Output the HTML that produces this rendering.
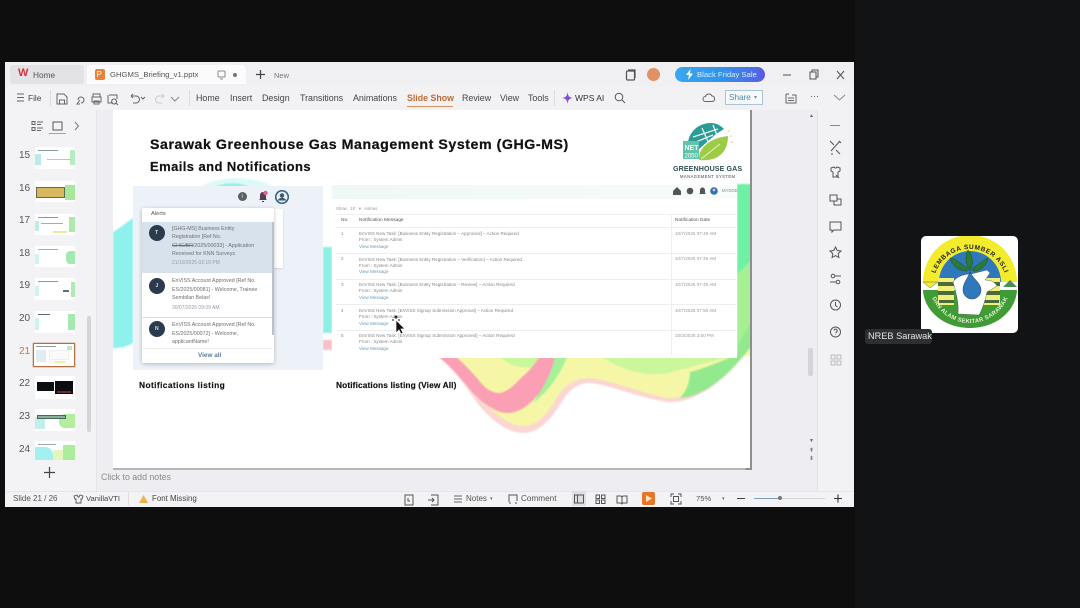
<!DOCTYPE html>
<html><head><meta charset="utf-8">
<style>
html,body{margin:0;padding:0;background:#101112;}
body{width:1080px;height:608px;overflow:hidden;position:relative;font-family:"Liberation Sans",sans-serif;}
#w{position:absolute;left:0;top:0;width:1080px;height:608px;filter:blur(.35px);overflow:hidden;}
.a{position:absolute;}
.t{position:absolute;white-space:nowrap;line-height:1;color:#4a4a4a;}
.m{font-size:8.9px;color:#444;top:94px;}
.th{position:absolute;left:35px;width:40px;background:#fff;overflow:hidden;}
.n{position:absolute;left:19px;font-size:10px;color:#555;line-height:1;}
.row{position:absolute;left:359px;font-size:4.55px;color:#888;line-height:6.4px;white-space:nowrap;}
.row i{font-style:normal;color:#6a9abd;}
.d{position:absolute;left:675px;font-size:4.6px;color:#999;white-space:nowrap;line-height:1;}
.no{position:absolute;left:341px;font-size:4.6px;color:#888;line-height:1;}
.al{position:absolute;left:172px;font-size:5.3px;line-height:8.5px;color:#6e6e6e;white-space:nowrap;}
svg{position:absolute;overflow:visible;}
</style></head><body><div id="w">
<div class="a" style="left:0;top:0;width:1080px;height:608px;background:#0e0e0f;"></div>
<div class="a" style="left:855px;top:0;width:225px;height:608px;background:#111315;"></div>

<!-- window -->
<div class="a" style="left:5px;top:62px;width:849px;height:445px;background:#eeeef2;"></div>
<div class="a" style="left:5px;top:62px;width:849px;height:24px;background:#f0f0f3;"></div>
<div class="a" style="left:5px;top:86px;width:849px;height:24px;background:#f2f2f5;"></div>
<div class="a" style="left:5px;top:110px;width:91px;height:381px;background:#f3f3f5;"></div>
<div class="a" style="left:96px;top:110px;width:1px;height:381px;background:#e5e5e8;"></div>
<div class="a" style="left:5px;top:491px;width:849px;height:16px;background:#f3f3f5;border-top:1px solid #e6e6e8;box-sizing:border-box;"></div>
<div class="a" style="left:817px;top:110px;width:37px;height:381px;background:#f2f2f5;border-left:1px solid #e2e2e6;box-sizing:border-box;"></div>

<!-- tabs -->
<div class="a" style="left:10px;top:65px;width:74px;height:19px;background:#e3e3e6;border-radius:3px;"></div>
<div class="a" style="left:87px;top:65px;width:159px;height:19px;background:#fbfbfc;border-radius:4px 4px 0 0;"></div>
<div class="t" style="left:18px;top:68px;font-size:11px;font-weight:bold;color:#d8323c;">W</div>
<div class="t" style="left:33px;top:71px;font-size:8.3px;color:#555;">Home</div>
<div class="a" style="left:95px;top:69px;width:10px;height:11px;background:#e8823a;border-radius:2px;"></div>
<div class="t" style="left:96.5px;top:70.5px;font-size:8px;color:#fff;">P</div>
<div class="t" style="left:110px;top:71px;font-size:7.7px;color:#555;">GHGMS_Briefing_v1.pptx</div>
<svg style="left:217px;top:70px" width="10" height="10" fill="none" stroke="#888" stroke-width="1"><rect x="1" y="1" width="7" height="6" rx="1"/><path d="M3 9h3"/></svg>
<div class="a" style="left:233px;top:73px;width:4px;height:4px;border-radius:50%;background:#777;"></div>
<svg style="left:255px;top:69px" width="11" height="11" stroke="#444" stroke-width="1.2"><path d="M5.5 1v9M1 5.5h9"/></svg>
<div class="t" style="left:274px;top:72px;font-size:7.5px;color:#777;">New</div>
<svg style="left:625px;top:69px" width="12" height="12" fill="none" stroke="#555" stroke-width="1.2"><rect x="1.5" y="2" width="8" height="9" rx="1"/><path d="M3 1h7v8"/></svg>
<div class="a" style="left:647px;top:68px;width:13px;height:13px;border-radius:50%;background:#e39163;"></div>
<div class="a" style="left:675px;top:67px;width:90px;height:15px;border-radius:8px;background:linear-gradient(90deg,#3ba6ee,#2f95ec 50%,#4f6ae8 90%,#5a58de);"></div>
<svg style="left:686px;top:69px" width="7" height="11"><path d="M4.500 0L0 6h3L2 11 7 4.500H4z" fill="#fff"/></svg>
<div class="t" style="left:697px;top:71px;font-size:7.700px;color:#dcecfa;">Black Friday Sale</div>
<svg style="left:783px;top:69px" width="60" height="12" fill="none" stroke="#555" stroke-width="1"><path d="M0 6h8"/><rect x="27" y="3" width="6" height="7"/><path d="M29 3V1h6v7h-2"/><path d="M54 2l7 8M61 2l-7 8"/></svg>

<!-- menu -->
<svg style="left:17px;top:93px" width="8" height="10" stroke="#666" stroke-width="1"><path d="M0 1h7M0 4.500h7M0 8h7"/></svg>
<div class="t" style="left:28px;top:94px;font-size:8.300px;color:#444;">File</div>
<div class="a" style="left:50px;top:90px;width:1px;height:16px;background:#ddd;"></div>
<svg style="left:56px;top:92px" width="125" height="13" fill="none" stroke="#666" stroke-width="1">
<path d="M1 2h7l3 3v7H1zM3.500 12V8h5v4"/>
<path d="M22 8a3 3 0 1 1 3 3M24 8l-3 4h3"/>
<path d="M37 5V2h7v3M36 5h9v5h-9zM38 9h5v3h-5z"/>
<path d="M53 3h8v4M52 3v8h5M58 7a2.500 2.500 0 1 0 .1 0M60 11l2 2"/>
<path d="M75 4h5a3 3 0 0 1 0 7h-3M75 4l2-2M75 4l2 2M85 5l2 2 2-2"/>
<path stroke="#ccc" d="M108 4h-5a3 3 0 0 0 0 7h3M108 4l-2-2M108 4l-2 2"/>
<path d="M115 5l4 4 4-4" stroke="#888"/></svg>
<div class="a" style="left:189px;top:90px;width:1px;height:16px;background:#ddd;"></div>
<div class="t m" style="left:196px;">Home</div>
<div class="t m" style="left:230px;">Insert</div>
<div class="t m" style="left:262px;">Design</div>
<div class="t m" style="left:300px;">Transitions</div>
<div class="t m" style="left:353px;">Animations</div>
<div class="t m" style="left:407px;color:#c06a33;font-weight:bold;font-size:8.800px;">Slide Show</div>
<div class="a" style="left:407px;top:106px;width:46px;height:1px;background:#d9915f;"></div>
<div class="t m" style="left:462px;">Review</div>
<div class="t m" style="left:500px;">View</div>
<div class="t m" style="left:528px;">Tools</div>
<div class="a" style="left:554px;top:90px;width:1px;height:16px;background:#ddd;"></div>
<svg style="left:562px;top:92px" width="11" height="12"><path d="M5.500 0C6 4 7 5.500 11 6 7 6.500 6 8 5.500 12 5 8 4 6.500 0 6 4 5.500 5 4 5.500 0z" fill="#8050d8"/></svg>
<div class="t m" style="left:575px;color:#333;font-size:8.500px;">WPS AI</div>
<svg style="left:614px;top:92px" width="12" height="12" fill="none" stroke="#555" stroke-width="1"><circle cx="5" cy="5" r="3.800"/><path d="M8 8l3 3"/></svg>
<svg style="left:702px;top:92px" width="13" height="12" fill="none" stroke="#666" stroke-width="1"><path d="M3.500 9.500a2.500 2.500 0 0 1 0-5 3.500 3.500 0 0 1 6.500-.5 2.800 2.800 0 0 1 .5 5.500z"/></svg>
<div class="a" style="left:725px;top:90px;width:38px;height:15px;border:1px solid #a9c5d3;box-sizing:border-box;background:#f6f8fa;"></div>
<div class="t" style="left:729px;top:94px;font-size:8.200px;color:#4e89ac;">Share</div>
<div class="t" style="left:754px;top:95px;font-size:6px;color:#888;">▾</div>
<svg style="left:785px;top:92px" width="12" height="12" fill="none" stroke="#666" stroke-width="1"><path d="M1 2h3M1 2v9h10V3H7M3 6h6M3 8.500h6"/></svg>
<div class="t" style="left:810px;top:92px;font-size:9px;color:#555;">···</div>
<svg style="left:834px;top:95px" width="11" height="6" fill="none" stroke="#888" stroke-width="1"><path d="M0 0l5.500 5L11 0"/></svg>

<!-- left panel -->
<svg style="left:32px;top:120px" width="55" height="13" fill="none" stroke="#666" stroke-width="1"><path d="M0 1.500h3v3H0zM0 7.500h3v3H0zM5 2h6M5 4.500h4M5 8h6M5 10.500h4"/><rect x="21" y="2" width="9" height="8" stroke="#555"/><path d="M43 2l3.500 4L43 10" stroke="#777"/></svg>
<div class="a" style="left:49px;top:133px;width:17px;height:1px;background:#d9915f;"></div>

<div class="n" style="top:151px;">15</div>
<div class="n" style="top:184px;">16</div>
<div class="n" style="top:216px;">17</div>
<div class="n" style="top:249px;">18</div>
<div class="n" style="top:281px;">19</div>
<div class="n" style="top:314px;">20</div>
<div class="n" style="top:347px;color:#c27a4a;">21</div>
<div class="n" style="top:379px;">22</div>
<div class="n" style="top:412px;">23</div>
<div class="n" style="top:445px;">24</div>

<div class="th" style="top:147px;height:22px;">
 <div class="a" style="left:0;top:7px;width:6px;height:11px;background:#b8ecec;"></div><div class="a" style="left:35px;top:3px;width:5px;height:15px;background:#b5ecc0;"></div>
 <div class="a" style="left:3px;top:3px;width:20px;height:1px;background:#8a9aa0;"></div><div class="a" style="left:12px;top:12px;width:24px;height:1px;background:#c0c4c8;"></div></div>
<div class="th" style="top:181px;height:21px;">
 <div class="a" style="left:1px;top:6px;width:29px;height:11px;background:#d9b75c;border:1px solid #5a6a55;box-sizing:border-box;"></div><div class="a" style="left:30px;top:4px;width:10px;height:15px;background:#a8e89a;"></div></div>
<div class="th" style="top:214px;height:21px;">
 <div class="a" style="left:0;top:7px;width:4px;height:10px;background:#bdeee8;"></div><div class="a" style="left:34px;top:3px;width:6px;height:15px;background:#aeeab0;"></div>
 <div class="a" style="left:3px;top:3px;width:20px;height:1px;background:#8a9aa0;"></div><div class="a" style="left:6px;top:9px;width:22px;height:1px;background:#aab;"></div><div class="a" style="left:18px;top:17px;width:14px;height:2px;background:#e9ec9f;"></div></div>
<div class="th" style="top:246px;height:21px;">
 <div class="a" style="left:0;top:8px;width:4px;height:10px;background:#cff3ee;"></div><div class="a" style="left:31px;top:5px;width:9px;height:13px;background:#a4e9b2;border-radius:4px 0 0 4px;"></div>
 <div class="a" style="left:3px;top:3px;width:20px;height:1px;background:#a0aaa8;"></div></div>
<div class="th" style="top:278px;height:22px;">
 <div class="a" style="left:0;top:8px;width:4px;height:10px;background:#cff3ee;"></div><div class="a" style="left:36px;top:4px;width:4px;height:15px;background:#aeeab8;"></div>
 <div class="a" style="left:3px;top:3px;width:20px;height:1px;background:#8a9aa0;"></div><div class="a" style="left:28px;top:12px;width:6px;height:2px;background:#5a6f85;"></div></div>
<div class="th" style="top:311px;height:22px;">
 <div class="a" style="left:0;top:7px;width:4px;height:12px;background:#cff3ee;"></div><div class="a" style="left:33px;top:3px;width:7px;height:16px;background:#a4e9b2;"></div>
 <div class="a" style="left:3px;top:3px;width:12px;height:1px;background:#667;"></div></div>
<div class="a" style="left:33px;top:343px;width:42px;height:24px;border:1px solid #b5703f;box-sizing:border-box;background:#fff;border-radius:1px;box-shadow:0 0 0 .5px #d9a98a;">
 <div class="a" style="left:2px;top:6px;width:10px;height:12px;background:#e3ebf2;"></div><div class="a" style="left:15px;top:6px;width:20px;height:10px;background:#fafafa;border:.5px solid #eee;box-sizing:border-box;"></div><div class="a" style="left:2px;top:2px;width:20px;height:1px;background:#8a9aa0;"></div><div class="a" style="left:33px;top:2px;width:5px;height:4px;background:#bfe7c4;"></div><div class="a" style="left:20px;top:17px;width:12px;height:2px;background:#eff0a9;"></div></div>
<div class="th" style="top:376px;height:23px;">
 <div class="a" style="left:2px;top:6px;width:17px;height:9px;background:#0c0f12;"></div><div class="a" style="left:20px;top:5px;width:18px;height:13px;background:#0b0c10;"></div><div class="a" style="left:22px;top:15px;width:14px;height:2px;background:#6e2a2a;"></div></div>
<div class="th" style="top:409px;height:22px;">
 <div class="a" style="left:0;top:8px;width:10px;height:12px;background:#c4eeea;"></div><div class="a" style="left:24px;top:5px;width:16px;height:14px;background:#b4eda0;border-radius:6px 0 0 6px;"></div>
 <div class="a" style="left:2px;top:6px;width:29px;height:4px;background:#8cb09a;border:1px solid #446a5d;box-sizing:border-box;"></div></div>
<div class="th" style="top:441px;height:19px;">
 <div class="a" style="left:0;top:6px;width:18px;height:13px;background:#a6eff0;border-radius:0 8px 0 0;"></div><div class="a" style="left:18px;top:9px;width:10px;height:10px;background:#e4f5c0;"></div><div class="a" style="left:28px;top:4px;width:12px;height:15px;background:#abed98;"></div>
 <div class="a" style="left:3px;top:3px;width:18px;height:1px;background:#9aa;"></div></div>
<div class="a" style="left:87px;top:316px;width:4px;height:116px;background:#d5d5d8;border-radius:2px;"></div>
<svg style="left:44px;top:467px" width="11" height="11" stroke="#444" stroke-width="1.200"><path d="M5.500 0v11M0 5.500h11"/></svg>

<!-- slide -->
<div class="a" style="left:113px;top:110px;width:639px;height:360px;background:linear-gradient(90deg,#b5b5b7 99%,#8e8e90 99%);"></div>
<div class="a" style="left:113px;top:110px;width:637px;height:358px;background:#fff;overflow:hidden;">
 <svg style="left:0;top:0;filter:blur(.8px)" width="637" height="358" viewBox="113 110 637 358">
  <path d="M113 232C120 228 127 222 133 218V343C127 347 120 348 113 348Z" fill="#8ff1eb"/>
  <path d="M200 187C218 176 252 174 274 187Z" fill="#dcfaf7"/>
  <path d="M214 187C225 182 240 182 250 187Z" fill="#97efe9"/>
  <path d="M437 356C450 365 465 385 473 397C485 415 505 433 523 433C540 433 552 418 563 400C570 388 580 383 590 383C610 385 640 398 667 402C700 404 730 375 752 345V356Z" fill="#fbd6d2"/>
  <path d="M445 356C458 368 470 385 478 395C490 410 508 426 523 426C538 426 548 413 558 396C566 383 578 378 590 378C612 380 640 393 667 398C695 400 728 372 752 342V356Z" fill="#f5f7a6"/>
  <path d="M500 356C510 370 540 372 556 358L600 356C625 372 650 378 672 372C695 366 720 358 738 356Z" fill="#caf69c"/>
  <path d="M437 356C452 366 466 385 473 393C485 405 497 413 507 413C520 413 531 404 541 391C548 380 553 370 556 358L540 356C534 366 528 372 522 377C514 385 508 392 499 393C490 393 483 386 477 378C470 370 462 362 455 356Z" fill="#fb9fb4"/>
  <path d="M555 357C552 372 545 385 533 403C548 392 560 375 567 357Z" fill="#a6f29a"/>
  <path d="M680 398C705 396 730 375 752 345V333L738 354C720 362 700 370 690 372C690 382 686 392 680 398Z" fill="#93ea8e"/>
  <path d="M737 184H752V260L737 275Z" fill="#6ff0a5"/>
  <path d="M737 275L752 260V320L737 345Z" fill="#a7ef93"/>
  <path d="M737 345L752 320V345L737 356Z" fill="#93ea8e"/>
  <path d="M323 247H332V333H323Z" fill="#8cf0e4"/>
  <path d="M323 340H332V350H323Z" fill="#f6c0c8"/>
 </svg>
 <div class="a" style="left:20px;top:76px;width:190px;height:184px;background:#edf2f8;"></div>
 <div class="a" style="left:160px;top:99px;width:10px;height:59px;background:#fff;box-shadow:0 1px 2px rgba(0,0,0,.12);"></div>
 <div class="a" style="left:29px;top:98px;width:132px;height:155px;background:#fff;box-shadow:0 1px 4px rgba(0,0,0,.25);border-radius:2px;"></div>
 <div class="a" style="left:29px;top:112px;width:130px;height:51px;background:#d7e2ed;"></div>
 <div class="a" style="left:159px;top:112px;width:2px;height:113px;background:#b9c2cc;"></div>
 <div class="a" style="left:29px;top:207px;width:130px;height:1px;background:#ddd;"></div>
</div>
<div class="t" style="left:150px;top:137.500px;font-size:14.200px;font-weight:bold;color:#111;letter-spacing:.55px;-webkit-text-stroke:.25px #111;">Sarawak Greenhouse Gas Management System (GHG-MS)</div>
<div class="t" style="left:150px;top:160px;font-size:13px;font-weight:bold;color:#111;letter-spacing:.42px;-webkit-text-stroke:.2px #111;">Emails and Notifications</div>

<!-- alerts -->
<div class="a" style="left:238px;top:192px;width:9px;height:9px;border-radius:50%;background:#5a5f63;"></div>
<div class="t" style="left:241.500px;top:194px;font-size:6px;color:#eee;">i</div>
<svg style="left:258px;top:191px" width="10" height="12"><path d="M5 1a3 3 0 0 1 3 3v4l1 1H1l1-1V4a3 3 0 0 1 3-3zM4 10h2v1H4z" fill="#5b3a55"/><circle cx="7.500" cy="2" r="2.200" fill="#d9668a"/></svg>
<svg style="left:275px;top:190px" width="14" height="14"><circle cx="7" cy="7" r="7" fill="#2e5f80"/><circle cx="7" cy="7" r="5.500" fill="#e8eef3"/><circle cx="7" cy="5.500" r="2.200" fill="#3a5a72"/><path d="M2.800 10.500c1-2 2.500-2.700 4.200-2.700s3.200.7 4.200 2.700" fill="#3a5a72"/></svg>
<div class="t" style="left:151px;top:211.500px;font-size:5.800px;color:#555;">Alerts</div>
<div class="a" style="left:149px;top:225px;width:16px;height:16px;border-radius:50%;background:#2b3a4d;"></div>
<div class="t" style="left:155px;top:231px;font-size:5px;color:#dde;font-weight:bold;">T</div>
<div class="al" style="top:224.500px;">[GHG-MS] Business Entity<br>Registration [Ref No.<br><s>GHG/BR</s>/2025/00033] - Application<br>Received for KNN Surveys</div>
<div class="t" style="left:172px;top:261px;font-size:5px;color:#99a;">21/10/2025 02:19 PM</div>
<div class="a" style="left:149px;top:278px;width:16px;height:16px;border-radius:50%;background:#2b3a4d;"></div>
<div class="t" style="left:155.500px;top:284px;font-size:5px;color:#dde;font-weight:bold;">J</div>
<div class="al" style="top:277px;">EnVISS Account Approved [Ref No.<br>ES/2025/00081] - Welcome, Trainee<br>Sembilan Belas!</div>
<div class="t" style="left:172px;top:305.500px;font-size:5px;color:#99a;">30/07/2025 09:09 AM</div>
<div class="a" style="left:149px;top:321px;width:16px;height:16px;border-radius:50%;background:#2b3a4d;"></div>
<div class="t" style="left:155px;top:327px;font-size:5px;color:#dde;font-weight:bold;">N</div>
<div class="al" style="top:321px;">EnVISS Account Approved [Ref No.<br>ES/2025/00072] - Welcome,<br>applicantName!</div>
<div class="a" style="left:142px;top:348px;width:130px;height:15px;background:#fff;border-top:1px solid #eee;box-sizing:border-box;"></div>
<div class="t" style="left:198px;top:353px;font-size:6.400px;color:#5d7f9c;font-weight:bold;">View all</div>
<div class="t" style="left:139px;top:381px;font-size:8.400px;font-weight:bold;color:#111;letter-spacing:.4px;-webkit-text-stroke:.15px #111;">Notifications listing</div>
<div class="t" style="left:336px;top:381px;font-size:8.400px;font-weight:bold;color:#111;letter-spacing:.1px;-webkit-text-stroke:.15px #111;">Notifications listing (View All)</div>

<!-- table -->
<div class="a" style="left:332px;top:185px;width:405px;height:173px;background:#fff;"></div>
<div class="a" style="left:332px;top:185px;width:405px;height:14px;background:linear-gradient(90deg,#eef8f6,#f8fcfb);"></div>
<svg style="left:672px;top:186px" width="70" height="10"><path d="M1 5l4-4 4 4v4H1z" fill="#555"/><circle cx="18" cy="5" r="3.300" fill="#555"/><path d="M27 8l1-1V4a2.500 2.500 0 0 1 5 0v3l1 1z" fill="#555"/><circle cx="42" cy="5" r="3.800" fill="#3173a9"/><circle cx="42" cy="4" r="1.300" fill="#dce"/></svg>
<div class="t" style="left:722px;top:188.500px;font-size:4.300px;color:#888;">MYDOE</div>
<div class="t" style="left:336px;top:207px;font-size:4.300px;color:#999;">Show &nbsp;&nbsp;10 &nbsp;&nbsp;▾ &nbsp;&nbsp;entries</div>
<div class="a" style="left:336px;top:214px;width:400px;height:1px;background:#f0f0f2;"></div>
<div class="a" style="left:671px;top:215px;width:1px;height:140px;background:#eceef0;"></div>
<div class="t" style="left:341px;top:219px;font-size:4.800px;color:#555;">No.</div>
<div class="t" style="left:359px;top:219px;font-size:4.800px;color:#555;">Notification Message</div>
<div class="t" style="left:675px;top:219px;font-size:4.800px;color:#555;">Notification Date</div>
<div class="a" style="left:336px;top:227px;width:400px;height:1px;background:#eceef0;"></div>
<div class="a" style="left:336px;top:253px;width:400px;height:1px;background:#eceef0;"></div>
<div class="a" style="left:336px;top:279px;width:400px;height:1px;background:#eceef0;"></div>
<div class="a" style="left:336px;top:304px;width:400px;height:1px;background:#eceef0;"></div>
<div class="a" style="left:336px;top:330px;width:400px;height:1px;background:#eceef0;"></div>
<div class="no" style="top:232px;">1</div><div class="no" style="top:257px;">2</div><div class="no" style="top:283px;">3</div><div class="no" style="top:309px;">4</div><div class="no" style="top:334px;">5</div>
<div class="row" style="top:231px;">EnVISS New Task: [Business Entity Registration – Approved] – Action Required<br>From : System Admin<br><i>View Message</i></div>
<div class="row" style="top:256.500px;">EnVISS New Task: [Business Entity Registration – Verification] – Action Required<br>From : System Admin<br><i>View Message</i></div>
<div class="row" style="top:282px;">EnVISS New Task: [Business Entity Registration – Review] – Action Required<br>From : System Admin<br><i>View Message</i></div>
<div class="row" style="top:308px;">EnVISS New Task: [EnVISS Signup Submission Approval] – Action Required<br>From : System Admin<br><i>View Message</i></div>
<div class="row" style="top:333px;">EnVISS New Task: [EnVISS Signup Submission Approved] – Action Required<br>From : System Admin<br><i>View Message</i></div>
<div class="d" style="top:232px;">10/7/2025 07:49 AM</div><div class="d" style="top:257px;">10/7/2025 07:49 AM</div><div class="d" style="top:283px;">10/7/2025 07:49 AM</div><div class="d" style="top:309px;">10/7/2025 07:50 AM</div><div class="d" style="top:334px;">10/3/2025 3:50 PM</div>
<svg style="left:391px;top:315px" width="16" height="20"><path d="M5 1v3M3.500 2.500L5 1l1.500 1.500M1 5h2M7 5h2" stroke="#111" stroke-width="1" fill="none"/><path d="M5 5v13l3-3 2 4 2-1-2-4h4z" fill="#111" stroke="#fff" stroke-width=".7"/></svg>

<!-- logo -->
<svg style="left:682px;top:122px" width="56" height="44">
 <path d="M6 20C8 8 18 1 29 1 34 1 38 3 42 7L34 12 16 28 7 28Z" fill="#2a9b96"/>
 <path d="M11 15L36 7M20 6L28 24M31 3L36 16M9 22L31 13" stroke="#e6f3f0" stroke-width="1.300" fill="none"/>
 <rect x="1" y="19" width="16" height="18" fill="#62c3a8"/>
 <text x="2.500" y="28" font-size="7" font-family="Liberation Sans" fill="#f2fff8" font-weight="bold">NET</text>
 <text x="2.500" y="35.500" font-size="6" font-family="Liberation Sans" fill="#fff">2050</text>
 <path d="M17 38C16 26 28 16 46 14 46 30 36 40 17 38Z" fill="#9ccb45"/>
 <path d="M19 37L38 22" stroke="#e7f3c6" stroke-width="1"/>
 <circle cx="47" cy="9" r=".8" fill="#e5c850"/><circle cx="49" cy="14" r=".8" fill="#e5c850"/><circle cx="50" cy="20" r=".8" fill="#e5c850"/>
</svg>
<div class="t" style="left:673px;top:166px;font-size:7.100px;font-weight:bold;color:#2f4f4f;letter-spacing:.1px;">GREENHOUSE GAS</div>
<div class="t" style="left:680px;top:175px;font-size:4.200px;color:#444;letter-spacing:.42px;">MANAGEMENT SYSTEM</div>

<!-- main scroll/right column -->
<div class="t" style="left:809px;top:114px;font-size:5px;color:#666;">▲</div>
<div class="a" style="left:808px;top:348px;width:5px;height:28px;background:#d5d5d9;border-radius:2px;"></div>
<div class="t" style="left:809px;top:439px;font-size:5px;color:#666;">▼</div>
<div class="t" style="left:809px;top:448px;font-size:6px;color:#666;">⇞</div>
<div class="t" style="left:809px;top:456px;font-size:6px;color:#666;">⇟</div>
<svg style="left:829px;top:122px" width="13" height="245" fill="none" stroke="#555" stroke-width="1">
 <path d="M1 3.500h10" stroke="#888"/>
 <path d="M1 19l4 4M7 28l4 4M11 19l-9 10M2 32l2 0M10 19l2 2"/>
 <path d="M2 46l3-1 1 1h1l1-1 3 1v3l-2 1v5H4v-5l-2-1zM7 53l3 3"/>
 <path d="M1 73h7v6H1zM5 79v4h7v-6H8"/>
 <path d="M1 100h11v8H5l-2 2v-2H1z"/>
 <path d="M6.500 125l1.700 3.500 3.800.5-2.800 2.600.7 3.900-3.400-1.900-3.400 1.900.7-3.900L1 129l3.800-.5z"/>
 <circle cx="4" cy="154" r="1.800"/><circle cx="9" cy="160" r="1.800"/><path d="M6 154h6M1 160h6"/>
 <circle cx="6.500" cy="183" r="5"/><path d="M6.500 180v3.500l2 1.500"/>
 <circle cx="6.500" cy="210" r="5"/><path d="M5 208.500a1.600 1.600 0 1 1 2 1.800v1M6.500 212.500v.5"/>
 <g stroke="#bbb"><rect x="2" y="233" width="4" height="4"/><rect x="8" y="233" width="4" height="4"/><rect x="2" y="239" width="4" height="4"/><rect x="8" y="239" width="4" height="4"/></g>
</svg>

<!-- notes -->
<div class="t" style="left:101px;top:473px;font-size:8.800px;color:#8a8a8a;">Click to add notes</div>

<!-- status -->
<div class="t" style="left:13px;top:495px;font-size:8px;color:#555;">Slide 21 / 26</div>
<svg style="left:73px;top:494px" width="11" height="10" fill="none" stroke="#555" stroke-width=".9"><path d="M1 2l3-1 1 2h1l1-2 3 1-1 3-1 0v4H3V5H2z"/></svg>
<div class="t" style="left:86px;top:495px;font-size:7.600px;color:#444;">VanillaVTI</div>
<div class="a" style="left:128px;top:492px;width:1px;height:13px;background:#ead9d9;"></div>
<svg style="left:139px;top:495px" width="9" height="8"><path d="M4.500 0L9 8H0z" fill="#eeb04a"/></svg>
<div class="t" style="left:152px;top:495px;font-size:7.900px;color:#444;">Font Missing</div>
<svg style="left:404px;top:494px" width="35" height="12" fill="none" stroke="#555" stroke-width="1"><rect x="1" y="1" width="8" height="10"/><path d="M4 4v3h2"/><path d="M27 1h7v10h-7M24 6h6M28 4l2 2-2 2"/></svg>
<svg style="left:454px;top:495px" width="9" height="9" stroke="#666" stroke-width=".9"><path d="M0 1h8M0 4h8M0 7h8"/></svg>
<div class="t" style="left:466px;top:495px;font-size:8px;color:#555;">Notes</div>
<div class="t" style="left:490px;top:497px;font-size:5px;color:#666;">▾</div>
<svg style="left:508px;top:494px" width="10" height="10" fill="none" stroke="#555" stroke-width="1"><path d="M1 8V1h8v6M1 9h2M7 9h2"/></svg>
<div class="t" style="left:521px;top:495px;font-size:8.200px;color:#555;">Comment</div>
<div class="a" style="left:572px;top:491px;width:14px;height:15px;background:#dfdfe2;"></div>
<svg style="left:574px;top:494px" width="60" height="10" fill="none" stroke="#555" stroke-width="1"><rect x="0.500" y="1" width="9" height="8"/><path d="M3.500 1v8"/><rect x="22" y="1" width="3.500" height="3.500"/><rect x="27.500" y="1" width="3.500" height="3.500"/><rect x="22" y="6" width="3.500" height="3.500"/><rect x="27.500" y="6" width="3.500" height="3.500"/><path d="M43 2h4l1 1 1-1h4v7h-4l-1 1-1-1h-4zM48 3v6"/></svg>
<div class="a" style="left:642px;top:492px;width:13px;height:13px;background:#e9742b;border-radius:2px;"></div>
<svg style="left:646px;top:495px" width="6" height="7"><path d="M0 0l6 3.500L0 7z" fill="#fbe9b5"/></svg>
<svg style="left:671px;top:494px" width="10" height="10" fill="none" stroke="#555" stroke-width="1"><path d="M0 3V0h3M7 0h3v3M10 7v3H7M3 10H0V7"/><rect x="2.500" y="2.500" width="5" height="5"/></svg>
<div class="t" style="left:696px;top:495px;font-size:7.600px;color:#555;">75%</div>
<div class="t" style="left:722px;top:497px;font-size:5px;color:#666;">▾</div>
<div class="a" style="left:737px;top:498px;width:8px;height:1px;background:#444;"></div>
<div class="a" style="left:754px;top:498px;width:71px;height:1px;background:#d5d5d9;"></div>
<div class="a" style="left:754px;top:498px;width:25px;height:1px;background:#7aa0bd;"></div>
<div class="a" style="left:778px;top:496px;width:4px;height:4px;border-radius:50%;background:#777;"></div>
<svg style="left:834px;top:494px" width="8" height="9" stroke="#333" stroke-width="1.100"><path d="M4 .5v8M0 4.500h8"/></svg>

<!-- participant -->
<div class="a" style="left:921px;top:236px;width:97px;height:97px;background:#fff;border-radius:5px;overflow:hidden;">
<svg style="left:0;top:0" width="97" height="97" viewBox="0 0 97 97">
 <path d="M2 46A47 47 0 0 1 96 46H80A31 31 0 0 0 18 46Z" fill="#f2ec2c"/>
 <path d="M18 46A31 31 0 0 1 80 46Z" fill="#2f78bc"/>
 <path d="M2 46H17L9 52Z" fill="#f2ec2c" stroke="#666" stroke-width=".5"/>
 <path d="M2 54H96C95 75 75 92 49 92 23 92 3 75 2 54Z" fill="#3f9c35"/>
 <path d="M82 51L89 44 96 51Z" fill="#4a8e57"/>
 <path d="M17 42h16v27H17zM62 42h17v27H62z" fill="#eef07a"/>
 <path d="M17 46h16v4H17zM17 55h16v4H17zM18 64h15v3H18zM62 46h17v4H62zM62 55h17v4H62zM62 64h16v3H62z" fill="#4c6a3a"/>
 <path d="M32 46C36 40 44 38 50 38L66 34 69 37 64 44C70 44 74 46 76 50L66 56C64 66 60 76 58 79L37 78C38 68 35 56 32 46Z" fill="#fff" stroke="#444" stroke-width=".4"/>
 <path d="M46 32C40 28 34 22 29 22 31 30 38 35 46 35ZM52 32C58 28 62 24 67 22 66 30 58 36 52 35ZM49 35C44 28 44 20 47 14 52 20 53 28 49 35Z" fill="#2d7a35" stroke="#1d4f22" stroke-width=".5"/>
 <path d="M49 36C46 44 42 47 42 54A9 9 0 0 0 60 54C60 47 53 44 49 36Z" fill="#2f78bc" stroke="#1a3f6a" stroke-width=".5"/>
 <defs><path id="arc1" d="M12 50A37 37 0 0 1 86 50"/><path id="arc2" d="M8 46A41 41 0 0 0 90 46"/></defs>
 <text font-size="6.500" font-weight="bold" font-family="Liberation Sans" fill="#222" letter-spacing=".6" text-anchor="middle"><textPath href="#arc1" startOffset="50%">LEMBAGA SUMBER ASLI</textPath></text>
 <text font-size="5.800" font-weight="bold" font-family="Liberation Sans" fill="#e5f0d5" letter-spacing=".3" text-anchor="middle"><textPath href="#arc2" startOffset="50%">DAN ALAM SEKITAR SARAWAK</textPath></text>
</svg></div>
<div class="a" style="left:865px;top:329px;width:67px;height:15px;background:#2d2f31;border-radius:3px;"></div>
<div class="t" style="left:868px;top:332px;font-size:9.200px;color:#e4e4e4;">NREB Sarawak</div>
</div></body></html>
